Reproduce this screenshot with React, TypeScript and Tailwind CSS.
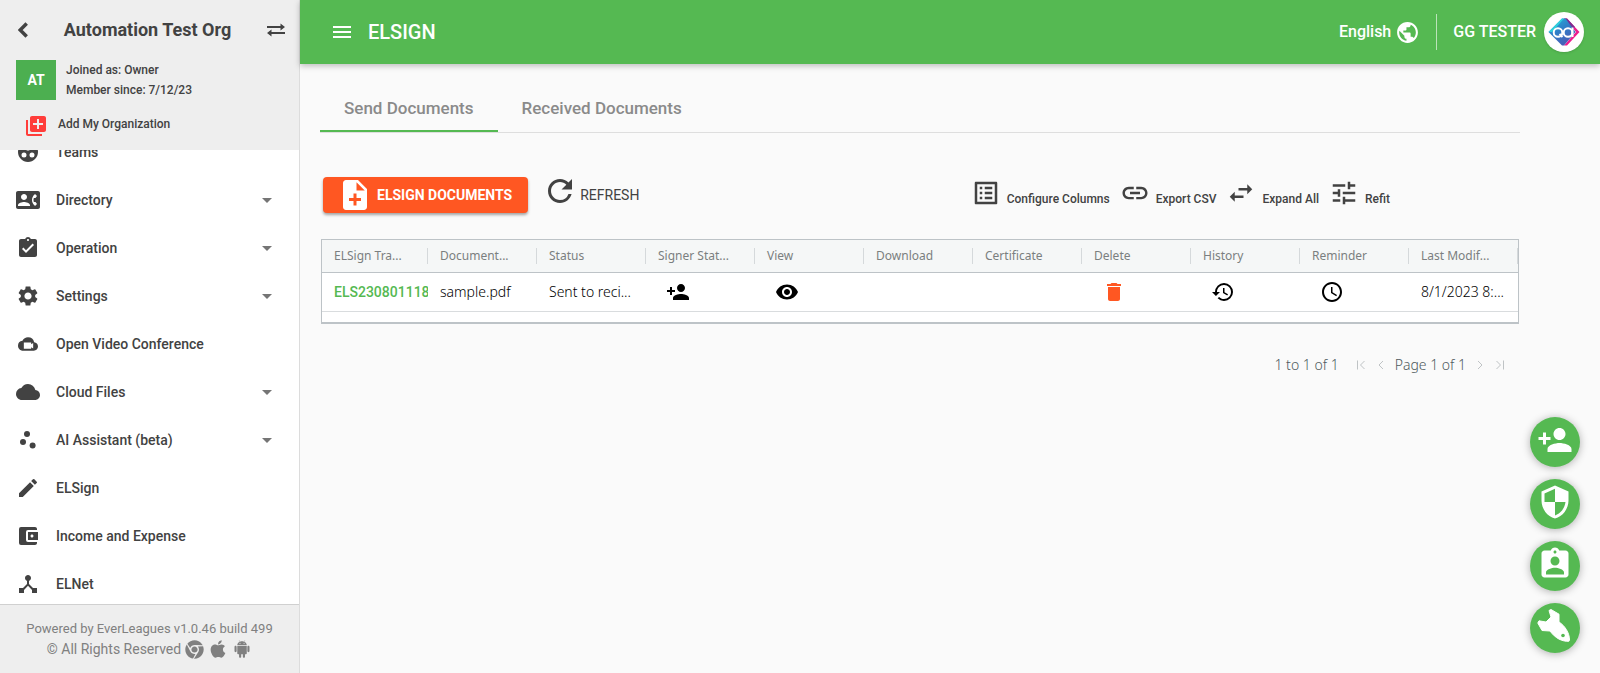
import React from "react";
import {
  MdAccessTime,
  MdAccountBalanceWallet,
  MdArrowDropDown,
  MdAssignmentInd,
  MdAssignmentTurnedIn,
  MdCloud,
  MdContactPhone,
  MdDelete,
  MdDeviceHub,
  MdEdit,
  MdGroupWork,
  MdHistory,
  MdLibraryAdd,
  MdLink,
  MdListAlt,
  MdMenu,
  MdNoteAdd,
  MdPersonAdd,
  MdPublic,
  MdRefresh,
  MdScatterPlot,
  MdSecurity,
  MdSettings,
  MdSwapHoriz,
  MdTune,
  MdVisibility,
} from "react-icons/md";
import { FaApple, FaChrome } from "react-icons/fa";
import { AiFillAndroid } from "react-icons/ai";

function VideoCloudIcon() {
  return (
    <svg viewBox="0 0 24 24" className="size-5" fill="currentColor" aria-hidden="true">
      <path d="M19.35 10.04A7.49 7.49 0 0 0 12 4C9.11 4 6.6 5.64 5.35 8.04A5.994 5.994 0 0 0 0 14c0 3.31 2.69 6 6 6h13c2.76 0 5-2.24 5-5 0-2.64-2.05-4.78-4.65-4.96z" />
      <path d="M7 10.2h8.800v2l2.400-1.500v6.600l-2.400-1.500v2H7z" fill="#fff" />
    </svg>
  );
}

function ExchangeIcon() {
  return (
    <svg viewBox="0 0 18 14" className="h-3.5 w-[18px]" fill="currentColor" aria-hidden="true">
      <path d="M0 3h13.5V.6L18 4l-4.500 3.400V5H0zM18 9H4.500V6.600L0 10l4.500 3.400V11H18z" />
    </svg>
  );
}

function BackIcon() {
  return (
    <svg viewBox="0 0 10 16" className="h-4 w-2.5" fill="none" stroke="currentColor" strokeWidth="3.500" aria-hidden="true">
      <path d="M8.700 1.500 2.200 8l6.500 6.500" />
    </svg>
  );
}

function RocketIcon() {
  return (
    <svg viewBox="0 0 36 36" className="size-9" aria-hidden="true">
      <path
        d="M12 2.500 14 1.500 22 6.200 22 14C27.500 17.500 32.500 24.500 32.500 32L31.800 33.300C25 33.500 18.500 30.500 13 23L5 22.500 .800 15 2 12.800 9 14 14 9z"
        fill="#fff"
        stroke="#fff"
        strokeLinejoin="round"
      />
      <circle cx="26" cy="27.500" r="1.800" fill="#55b952" />
    </svg>
  );
}

function AvatarLogo() {
  return (
    <svg viewBox="0 0 40 40" className="size-10" role="img" aria-label="GG TESTER">
      <defs>
        <linearGradient id="qa-fill" x1="0" y1="0" x2="0.600" y2="1">
          <stop offset="0" stopColor="#21b8d8" />
          <stop offset="0.500" stopColor="#2f7fc8" />
          <stop offset="1" stopColor="#4a5bb5" />
        </linearGradient>
      </defs>
      <path d="M20 6.500h3L35.500 20 23 33.500h-3L32 20z" fill="#ee1c8e" />
      <path d="M20 6.500h3L31 15l-2.500 2z" fill="#7b2d91" />
      <path d="M18 6.500h3.500L31.500 20 20 33.500h-2L4.500 20z" fill="url(#qa-fill)" />
      <path d="M18 6.500h2L8 20H4.500z" fill="#2fd0dc" />
      <g fill="none" stroke="#fff" strokeWidth="2">
        <circle cx="14" cy="20.500" r="4.300" />
        <circle cx="24" cy="20.500" r="4.300" />
        <path d="M15.500 22l3 3M28.500 15.500v9.500" />
      </g>
    </svg>
  );
}

const navItems = [
  { label: "Teams", icon: <MdGroupWork size={24} />, expandable: false },
  { label: "Directory", icon: <MdContactPhone size={24} />, expandable: true },
  { label: "Operation", icon: <MdAssignmentTurnedIn size={24} />, expandable: true },
  { label: "Settings", icon: <MdSettings size={24} />, expandable: true },
  { label: "Open Video Conference", icon: <VideoCloudIcon />, expandable: false },
  { label: "Cloud Files", icon: <MdCloud size={24} />, expandable: true },
  { label: "AI Assistant (beta)", icon: <MdScatterPlot size={24} />, expandable: true },
  { label: "ELSign", icon: <MdEdit size={24} />, expandable: false },
  { label: "Income and Expense", icon: <MdAccountBalanceWallet size={24} />, expandable: false },
  { label: "ELNet", icon: <MdDeviceHub size={24} />, expandable: false },
];

const gridTools = [
  { label: "Configure Columns", icon: <MdListAlt size={30} /> },
  { label: "Export CSV", icon: <MdLink size={30} /> },
  { label: "Expand All", icon: <MdSwapHoriz size={30} /> },
  { label: "Refit", icon: <MdTune size={30} /> },
];

function IconButton({ label, children }: { label: string; children: React.ReactNode }) {
  return (
    <button type="button" aria-label={label} className="ml-2 flex items-center">
      {children}
    </button>
  );
}

const columns: { title: string; cell: React.ReactNode }[] = [
  {
    title: "ELSign Tra...",
    cell: (
      <a href="#document" className="block overflow-hidden font-[Roboto,sans-serif] font-medium text-[#55b952]">
        ELS230801118
      </a>
    ),
  },
  { title: "Document...", cell: "sample.pdf" },
  { title: "Status", cell: "Sent to reci..." },
  { title: "Signer Stat...", cell: <IconButton label="Add signer"><MdPersonAdd size={24} /></IconButton> },
  { title: "View", cell: <IconButton label="View"><MdVisibility size={24} /></IconButton> },
  { title: "Download", cell: null },
  { title: "Certificate", cell: null },
  {
    title: "Delete",
    cell: (
      <IconButton label="Delete">
        <MdDelete size={24} color="#ff5722" />
      </IconButton>
    ),
  },
  { title: "History", cell: <IconButton label="History"><MdHistory size={24} /></IconButton> },
  { title: "Reminder", cell: <IconButton label="Reminder"><MdAccessTime size={24} /></IconButton> },
  { title: "Last Modif...", cell: "8/1/2023 8:..." },
];

const quickActions = [
  { label: "Invite person", icon: <MdPersonAdd size={36} /> },
  { label: "Security", icon: <MdSecurity size={36} /> },
  { label: "Assignments", icon: <MdAssignmentInd size={36} /> },
  { label: "Quick start", icon: <RocketIcon /> },
];

function Sidebar() {
  return (
    <aside className="flex w-[300px] shrink-0 flex-col border-r border-[#dcdcdc] bg-white text-[#424242]">
      <div className="h-[150px] shrink-0 bg-[#eeeeee] pt-4">
        <div className="flex h-7 items-center pr-3.5 pl-[18px]">
          <button type="button" aria-label="Back">
            <BackIcon />
          </button>
          <h2 className="flex-1 text-center text-lg font-bold">Automation Test Org</h2>
          <button type="button" aria-label="Switch organization">
            <ExchangeIcon />
          </button>
        </div>
        <div className="mt-4 flex gap-2.5 pl-4">
          <div className="flex size-10 items-center justify-center bg-[#4caf50] text-sm font-bold text-white">AT</div>
          <div className="text-xs leading-5 font-medium">
            <p>Joined as: Owner</p>
            <p>Member since: 7/12/23</p>
          </div>
        </div>
        <button type="button" className="mt-3.5 flex items-start gap-2.5 pl-6 text-xs leading-5 font-medium">
          <MdLibraryAdd size={24} color="#ff3d3a" />
          Add My Organization
        </button>
      </div>
      <nav className="min-h-0 flex-1 overflow-hidden">
        <ul className="-mt-[22px]">
          {navItems.map((item) => (
            <li key={item.label}>
              <a href="#nav" className="flex h-12 items-center pr-5 pl-4 text-sm font-medium">
                <span className="flex w-10 shrink-0">
                  <span className="flex w-6 justify-center">{item.icon}</span>
                </span>
                <span className="flex-1">{item.label}</span>
                {item.expandable && <MdArrowDropDown size={24} color="#757575" />}
              </a>
            </li>
          ))}
        </ul>
      </nav>
      <footer className="shrink-0 border-t border-[#d0d0d0] bg-[#eeeeee] py-3.5 text-center text-[13px] leading-5 text-[#808080]">
        <p>Powered by EverLeagues v1.0.46 build 499</p>
        <p className="flex items-center justify-center gap-1 text-sm leading-5">
          © All Rights Reserved
          <FaChrome size={19} />
          <FaApple size={20} />
          <AiFillAndroid size={20} />
        </p>
      </footer>
    </aside>
  );
}

function TopBar() {
  return (
    <header className="flex h-16 shrink-0 items-center bg-[#55b952] pr-4 pl-[30px] text-white shadow-[0_2px_6px_rgba(0,0,0,0.25)]">
      <button type="button" aria-label="Toggle menu">
        <MdMenu size={24} />
      </button>
      <h1 className="ml-3.5 flex-1 text-xl font-medium">ELSIGN</h1>
      <button type="button" className="flex items-center gap-1 text-base font-medium">
        English
        <MdPublic size={25} />
      </button>
      <span className="mx-4 h-9 w-px bg-white/60" />
      <button type="button" className="flex items-center gap-2 text-base font-medium">
        GG TESTER
        <span className="rounded-full bg-white shadow">
          <AvatarLogo />
        </span>
      </button>
    </header>
  );
}

function DocumentsTable() {
  return (
    <div className="mx-px mt-[26px] border border-b-2 border-[#bdc3c7] bg-white pb-2.5 font-['Noto_Sans',sans-serif]">
      <table className="w-full table-fixed border-collapse text-left">
        <thead>
          <tr className="h-8 border-b border-[#bdc3c7] bg-[#f5f7f7] text-xs text-[#7b7f80]">
            {columns.map((column) => (
              <th key={column.title} className="p-0 font-normal first:w-[106px]">
                <div className="flex h-4 items-center border-r border-[#d5d9db] px-3">
                  <span className="whitespace-nowrap">{column.title}</span>
                </div>
              </th>
            ))}
          </tr>
        </thead>
        <tbody>
          <tr className="h-[39px] border-b border-[#d9dcde] text-sm font-light text-black">
            {columns.map((column) => (
              <td key={column.title} className="py-0 pr-3 pl-3 whitespace-nowrap first:pr-0">
                {column.cell}
              </td>
            ))}
          </tr>
        </tbody>
      </table>
    </div>
  );
}

function PagerButton({ label, path }: { label: string; path: string }) {
  return (
    <button type="button" aria-label={label} disabled>
      <svg viewBox="0 0 12 12" className="size-3" fill="none" stroke="#bfc3c5" aria-hidden="true">
        <path d={path} />
      </svg>
    </button>
  );
}

function Pager() {
  return (
    <div className="mt-[31px] flex items-center justify-end gap-2 pr-3.5 font-['Noto_Sans',sans-serif] text-sm font-light text-[#4f5b60]">
      <span className="mr-2">1 to 1 of 1</span>
      <PagerButton label="First page" path="M2.500 1.500v9M9.500 2 5.500 6l4 4" />
      <PagerButton label="Previous page" path="M8 2 4 6l4 4" />
      <span>Page 1 of 1</span>
      <PagerButton label="Next page" path="M4 2l4 4-4 4" />
      <PagerButton label="Last page" path="M2.500 2l4 4-4 4M9.500 1.500v9" />
    </div>
  );
}

export default function App() {
  return (
    <div className="flex h-screen bg-[#fafafa] font-[Roboto,sans-serif]">
      <Sidebar />
      <div className="flex min-w-0 flex-1 flex-col">
        <TopBar />
        <main className="pt-5 pr-20 pl-5 text-[#424242]">
          <div role="tablist" className="flex border-b border-[#dedede] text-[17px] font-medium text-[#8a8a8a]">
            <button type="button" role="tab" aria-selected="true" className="h-12 border-b-2 border-[#55b952] px-6 pt-1">
              Send Documents
            </button>
            <button type="button" role="tab" aria-selected="false" className="h-12 border-b-2 border-transparent px-6 pt-1">
              Received Documents
            </button>
          </div>
          <div className="mt-11 flex h-9 items-center pl-[3px]">
            <button
              type="button"
              className="flex h-9 items-center gap-1 rounded bg-[#ff5722] pr-4 pl-3.5 text-sm font-bold text-white shadow-[0_2px_3px_rgba(0,0,0,0.35)]"
            >
              <MdNoteAdd size={36} />
              ELSIGN DOCUMENTS
            </button>
            <button type="button" className="ml-3.5 flex items-center gap-0.5 text-sm">
              <MdRefresh size={36} className="-mt-2" />
              REFRESH
            </button>
            <div className="mr-[130px] ml-auto flex gap-2.5 pt-2 text-xs font-medium">
              {gridTools.map((tool) => (
                <button key={tool.label} type="button" className="flex items-center gap-1.5">
                  <span className="-mt-3">{tool.icon}</span>
                  {tool.label}
                </button>
              ))}
            </div>
          </div>
          <DocumentsTable />
          <Pager />
        </main>
      </div>
      <div className="fixed right-5 bottom-5 flex flex-col gap-3">
        {quickActions.map((action) => (
          <button
            key={action.label}
            type="button"
            aria-label={action.label}
            className="flex size-[50px] items-center justify-center rounded-full bg-[#55b952] pb-1 text-white shadow-[0_1px_8px_rgba(0,0,0,0.3)]"
          >
            {action.icon}
          </button>
        ))}
      </div>
    </div>
  );
}
